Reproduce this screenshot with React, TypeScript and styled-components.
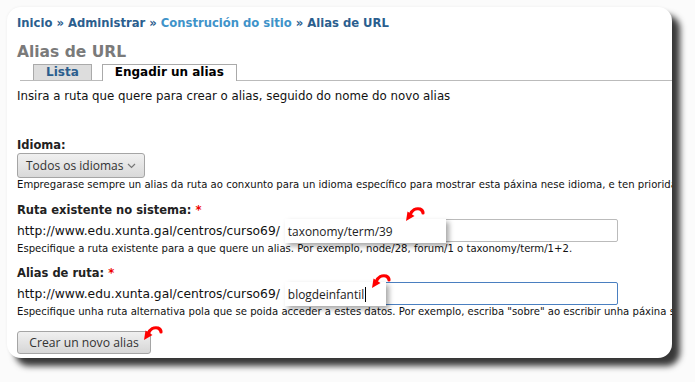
import styled, { createGlobalStyle } from "styled-components";

const GlobalStyle = createGlobalStyle`
    html, body {
        margin: 0;
        padding: 0;
        background: #fbfbfb;
    }
    body {
        width: 695px;
        height: 382px;
        overflow: hidden;
    }
`;

const RedArrow = () => (
    <svg width="20" height="15" viewBox="0 0 20 15">
        <path d="M5 8 C7 3, 11 1, 15 2 C17 3, 18 4, 18 6" stroke="#f00" strokeWidth="3.2" fill="none" strokeLinecap="round" />
        <path d="M1 14 L2.5 4.5 L9.5 9 Z" fill="#f00" />
    </svg>
);

const crumbs = [
    { label: "Inicio", light: false },
    { label: "Administrar", light: false },
    { label: "Construción do sitio", light: true },
    { label: "Alias de URL", light: false },
];

export default function App() {
    return (
        <>
            <GlobalStyle />
            <PageStyled>
                <CardStyled>
                    <BreadcrumbStyled>
                        {crumbs.map((c, i) => (
                            <span key={c.label}>
                                <CrumbLinkStyled $light={c.light}>{c.label}</CrumbLinkStyled>
                                {i < crumbs.length - 1 && <SepStyled> » </SepStyled>}
                            </span>
                        ))}
                    </BreadcrumbStyled>
                    <TitleStyled>Alias de URL</TitleStyled>
                    <TabsStyled>
                        <TabStyled $active={false}>Lista</TabStyled>
                        <TabStyled $active={true}>Engadir un alias</TabStyled>
                    </TabsStyled>
                    <IntroStyled>Insira a ruta que quere para crear o alias, seguido do nome do novo alias</IntroStyled>

                    <FieldStyled $top={34}>
                        <LabelStyled>Idioma:</LabelStyled>
                        <SelectStyled>
                            Todos os idiomas
                            <svg width="9" height="6" viewBox="0 0 9 6">
                                <path d="M1 1 L4.5 4.5 L8 1" stroke="#777" strokeWidth="1.2" fill="none" />
                            </svg>
                        </SelectStyled>
                        <HelpStyled>
                            Empregarase sempre un alias da ruta ao conxunto para un idioma específico para mostrar esta páxina nese idioma, e ten prioridade sobre os alias definidos para todos os idiomas.
                        </HelpStyled>
                    </FieldStyled>

                    <FieldStyled $top={11}>
                        <LabelStyled>Ruta existente no sistema: <ReqStyled>*</ReqStyled></LabelStyled>
                        <RowStyled>
                            <PrefixStyled>http://www.edu.xunta.gal/centros/curso69/</PrefixStyled>
                            <InputBoxStyled $focused={false}>
                                <ZoomBoxStyled $width={161}>taxonomy/term/39</ZoomBoxStyled>
                                <ArrowSpotStyled $left={119} $top={-13}><RedArrow /></ArrowSpotStyled>
                            </InputBoxStyled>
                        </RowStyled>
                        <HelpStyled>
                            Especifique a ruta existente para a que quere un alias. Por exemplo, node/28, forum/1 o taxonomy/term/1+2.
                        </HelpStyled>
                    </FieldStyled>

                    <FieldStyled $top={10}>
                        <LabelStyled>Alias de ruta: <ReqStyled>*</ReqStyled></LabelStyled>
                        <RowStyled>
                            <PrefixStyled>http://www.edu.xunta.gal/centros/curso69/</PrefixStyled>
                            <InputBoxStyled $focused={true}>
                                <ZoomBoxStyled $width={101}>blogdeinfantil<CaretStyled /></ZoomBoxStyled>
                                <ArrowSpotStyled $left={85} $top={-9}><RedArrow /></ArrowSpotStyled>
                            </InputBoxStyled>
                        </RowStyled>
                        <HelpStyled>
                            Especifique unha ruta alternativa pola que se poida acceder a estes datos. Por exemplo, escriba "sobre" ao escribir unha páxina sobre o centro.
                        </HelpStyled>
                    </FieldStyled>

                    <ButtonWrapStyled>
                        <ButtonStyled>Crear un novo alias</ButtonStyled>
                        <ArrowSpotStyled $left={126} $top={-5}><RedArrow /></ArrowSpotStyled>
                    </ButtonWrapStyled>
                </CardStyled>
            </PageStyled>
        </>
    );
}

// [== STYLES ==]
const PageStyled = styled.div`
    padding: 7px 0 0 7px;
`;

const CardStyled = styled.div`
    width: 665px;
    height: 351px;
    box-sizing: border-box;
    background: #fff;
    border-radius: 14px;
    box-shadow: 8px 8px 6px rgba(0, 0, 0, 0.78), 0 0 3px rgba(0, 0, 0, 0.06);
    padding: 9px 0 0 10px;
    overflow: hidden;
    font-family: "DejaVu Sans", Verdana, sans-serif;
    color: #111;
`;

const BreadcrumbStyled = styled.div`
    font-size: 11.6px;
    font-weight: bold;
    line-height: 14px;
    white-space: nowrap;
`;

const CrumbLinkStyled = styled.span<{ $light: boolean }>`
    color: ${(p) => (p.$light ? "#3f93c9" : "#2b5e8e")};
`;

const SepStyled = styled.span`
    color: #2b5e8e;
`;

const TitleStyled = styled.h1`
    margin: 13px 0 0 0;
    font-size: 15.5px;
    line-height: 18px;
    font-weight: bold;
    color: #7a7a7a;
`;

const TabsStyled = styled.div`
    display: flex;
    gap: 10px;
    margin: 3px 0 0 3px;
    padding-left: 13px;
    border-bottom: 1px solid #bbb;
`;

const TabStyled = styled.div<{ $active: boolean }>`
    line-height: 15px;
    padding: 0 12px;
    border: 1px solid #aaa;
    border-bottom: none;
    box-sizing: border-box;
    font-size: 12px;
    font-weight: bold;
    background: ${(p) => (p.$active ? "#fff" : "#ddd")};
    color: ${(p) => (p.$active ? "#000" : "#2b5e8e")};
    margin-bottom: ${(p) => (p.$active ? "-1px" : "0")};
    height: ${(p) => (p.$active ? "17px" : "16px")};
`;

const IntroStyled = styled.p`
    margin: 8px 0 0 0;
    font-size: 11.8px;
    line-height: 15px;
    white-space: nowrap;
`;

const FieldStyled = styled.div<{ $top: number }>`
    margin-top: ${(p) => p.$top}px;
`;

const LabelStyled = styled.div`
    font-size: 11.5px;
    font-weight: bold;
    line-height: 15px;
    color: #222;
`;

const ReqStyled = styled.span`
    color: #e00;
`;

const SelectStyled = styled.div`
    display: inline-flex;
    align-items: center;
    justify-content: space-between;
    height: 25px;
    width: 128px;
    box-sizing: border-box;
    padding: 0 8px 0 8px;
    border: 1px solid #a5a5a5;
    border-radius: 3px;
    background: linear-gradient(#f0f0f0, #d9d9d9);
    font-family: "Open Sans", sans-serif;
    font-size: 12px;
    white-space: nowrap;
    color: #333;
`;

const HelpStyled = styled.div`
    font-size: 10.1px;
    line-height: 14px;
    white-space: nowrap;
    color: #111;
`;

const RowStyled = styled.div`
    display: flex;
    align-items: center;
    gap: 5px;
    margin-top: 1px;
`;

const PrefixStyled = styled.span`
    font-size: 12.3px;
    white-space: nowrap;
`;

const InputBoxStyled = styled.div<{ $focused: boolean }>`
    position: relative;
    width: 333px;
    height: 23px;
    box-sizing: border-box;
    border: 1px solid ${(p) => (p.$focused ? "#4a7fc0" : "#bbb")};
    border-radius: 2px;
    background: #fff;
`;

const ZoomBoxStyled = styled.div<{ $width: number }>`
    position: absolute;
    left: -1px;
    top: -1px;
    width: ${(p) => p.$width}px;
    height: 24px;
    box-sizing: border-box;
    padding-left: 3px;
    display: flex;
    align-items: center;
    background: #fff;
    box-shadow: 3px 3px 5px rgba(0, 0, 0, 0.35);
    font-family: "Open Sans", sans-serif;
    font-size: 11.9px;
    color: #222;
`;

const CaretStyled = styled.span`
    display: inline-block;
    width: 1px;
    height: 15px;
    background: #000;
    margin-left: 1px;
`;

const ArrowSpotStyled = styled.div<{ $left: number; $top: number }>`
    position: absolute;
    left: ${(p) => p.$left}px;
    top: ${(p) => p.$top}px;
    line-height: 0;
`;

const ButtonWrapStyled = styled.div`
    position: relative;
    display: inline-block;
    margin-top: 12px;
`;

const ButtonStyled = styled.button`
    display: block;
    height: 23px;
    width: 134px;
    border: 1px solid #a5a5a5;
    border-radius: 3px;
    background: linear-gradient(#f0f0f0, #d6d6d6);
    font-family: "Open Sans", sans-serif;
    font-size: 12.2px;
    color: #333;
    padding: 0;
`;
